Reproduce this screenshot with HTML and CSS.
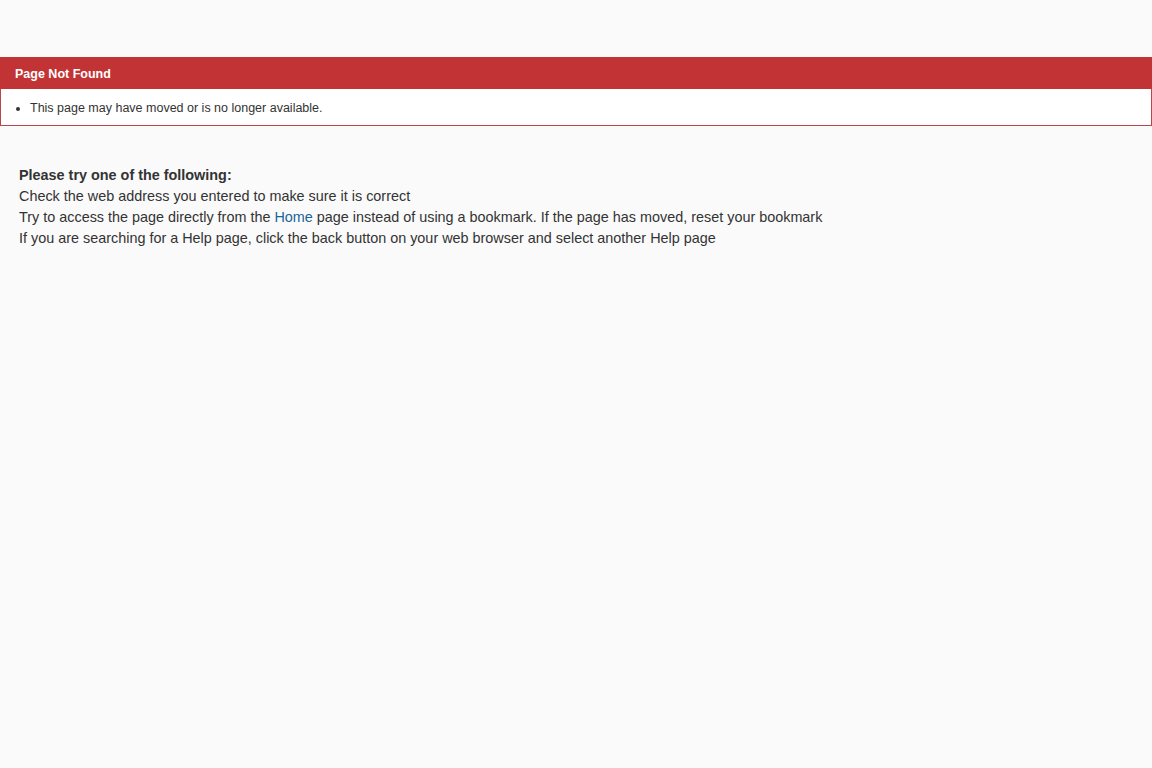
FILE: index.html
```html
<!DOCTYPE html>
<html>
<head>
<meta charset="utf-8">
<title>Page Not Found</title>
<link rel="stylesheet" href="styles.css">
</head>
<body>
<div class="panel">
  <div class="panel-head">Page Not Found</div>
  <div class="panel-body">
    <ul class="msgs">
      <li>This page may have moved or is no longer available.</li>
    </ul>
  </div>
</div>
<div class="help">
  <div class="help-title">Please try one of the following:</div>
  <div class="help-line">Check the web address you entered to make sure it is correct</div>
  <div class="help-line">Try to access the page directly from the <a class="link" href="#">Home</a> page instead of using a bookmark. If the page has moved, reset your bookmark</div>
  <div class="help-line">If you are searching for a Help page, click the back button on your web browser and select another Help page</div>
</div>
</body>
</html>
```
FILE: styles.css
```css
html, body {
  margin: 0;
  padding: 0;
  background: #fafafa;
  font-family: "Liberation Sans", Arial, sans-serif;
  color: #333333;
}
.panel {
  margin-top: 57px;
  border: 1px solid #b8464b;
  border-top: none;
}
.panel-head {
  background: #c23335;
  color: #ffffff;
  font-weight: bold;
  font-size: 12.5px;
  line-height: 16px;
  padding: 9px 15px 7px;
  margin: 0 -1px;
}
.panel-body {
  background: #ffffff;
}
.msgs {
  margin: 0;
  padding: 11px 0 9px 29px;
  font-size: 12.5px;
  line-height: 16px;
}
.help {
  padding: 39px 19px 0;
  font-size: 14.4px;
  line-height: 21px;
}
.help-title {
  font-weight: bold;
}
.link {
  color: #1a6496;
  text-decoration: none;
}
```
